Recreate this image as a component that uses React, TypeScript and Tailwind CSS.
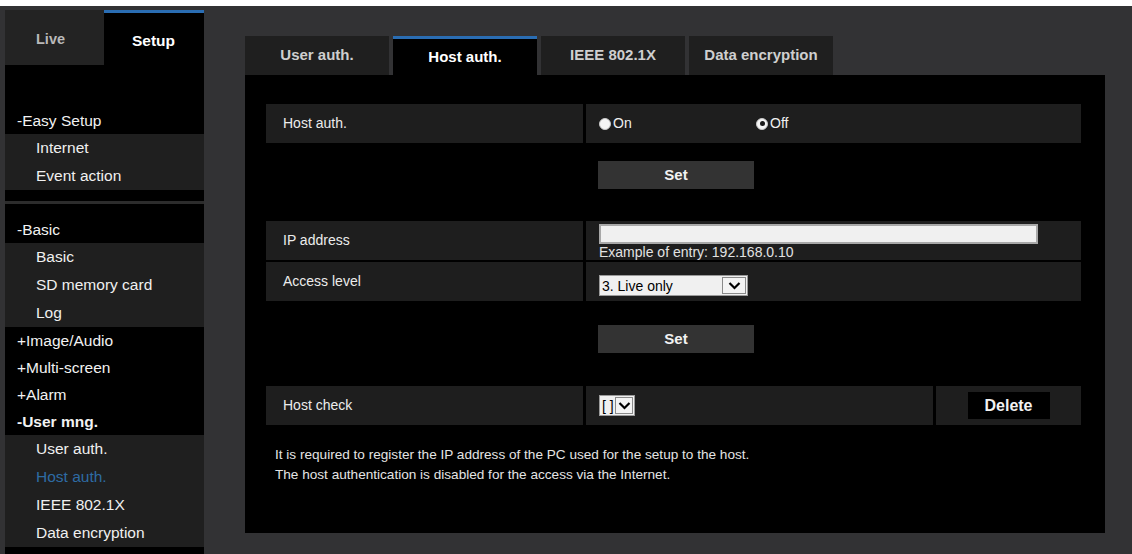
const font = "font-['Liberation_Sans',Arial,Helvetica,sans-serif]";

type NavItem = { label: string; active?: boolean };

function NavHead({ label, bold }: { label: string; bold?: boolean }) {
  return (
    <div className={`h-[27px] flex items-center pl-[12px] text-[15.5px] text-[#f2f2f2] ${bold ? "font-bold" : ""}`}>
      {label}
    </div>
  );
}

function NavGroup({ items }: { items: NavItem[] }) {
  return (
    <div className="bg-[#1f1f1f]">
      {items.map((item) => (
        <div
          key={item.label}
          className={`h-[28px] flex items-center pl-[31px] text-[15.5px] ${item.active ? "text-[#2e6ba3]" : "text-[#f0f0f0]"}`}
        >
          {item.label}
        </div>
      ))}
    </div>
  );
}

function Sidebar() {
  return (
    <div className="ml-[5px] mt-[4px] w-[199px] bg-black flex flex-col">
      <div className="flex h-[55px]">
        <div className="w-[99px] bg-[#232323] flex items-center pl-[31px] pt-[5px] text-[14.5px] font-bold text-[#b9b9b9]">
          Live
        </div>
        <div className="w-[100px] bg-black border-t-[3px] border-[#2a6db3] flex items-center pl-[28px] pt-[3px] text-[15.5px] font-bold text-white">
          Setup
        </div>
      </div>

      <div className="h-[42px]" />
      <NavHead label="-Easy Setup" />
      <NavGroup items={[{ label: "Internet" }, { label: "Event action" }]} />
      <div className="h-[11px]" />
      <div className="h-[3px] bg-[#2c2c2c]" />
      <div className="h-[12px]" />
      <NavHead label="-Basic" />
      <NavGroup items={[{ label: "Basic" }, { label: "SD memory card" }, { label: "Log" }]} />
      <NavHead label="+Image/Audio" />
      <NavHead label="+Multi-screen" />
      <NavHead label="+Alarm" />
      <NavHead label="-User mng." bold />
      <NavGroup
        items={[
          { label: "User auth." },
          { label: "Host auth.", active: true },
          { label: "IEEE 802.1X" },
          { label: "Data encryption" },
        ]}
      />
      <div className="flex-1" />
    </div>
  );
}

function Label({ text }: { text: string }) {
  return <div className="w-[317px] bg-[#1e1e1e] flex items-center pl-[17px] text-[14px] text-[#ececec]">{text}</div>;
}

function SetButton() {
  return (
    <div className="ml-[332px] w-[156px] h-[28px] bg-[#333333] flex items-center justify-center text-[15px] font-bold text-[#f2f2f2]">
      Set
    </div>
  );
}

function Chevron() {
  return (
    <svg width="13" height="9" viewBox="0 0 13 9" className="block">
      <polyline points="1.5,2 6.5,7 11.5,2" fill="none" stroke="#000" strokeWidth="2.2" />
    </svg>
  );
}

function SelectBox({ value, width, arrow }: { value: string; width: number; arrow: number }) {
  return (
    <div className="flex h-[21px] bg-[#f0f0f0] border border-[#9a9a9a] items-stretch" style={{ width }}>
      <div className="flex-1 flex items-center pl-[2px] text-[14px] text-black leading-none overflow-hidden whitespace-nowrap">
        {value}
      </div>
      <div
        className="my-[1px] mr-[1px] border border-[#8a8a8a] bg-[#f4f4f4] flex items-center justify-center"
        style={{ width: arrow }}
      >
        <Chevron />
      </div>
    </div>
  );
}

function Radio({ checked, label }: { checked: boolean; label: string }) {
  return (
    <div className="flex items-center gap-[2px] text-[14px] text-[#f0f0f0]">
      <div className="w-[12px] h-[12px] rounded-full bg-[#f5f5f5] border border-[#c8c8c8] flex items-center justify-center">
        {!checked && <div className="w-[5px] h-[5px] rounded-full bg-[#1a1a1a]" />}
      </div>
      <span>{label}</span>
    </div>
  );
}

function Tab({ label, active }: { label: string; active?: boolean }) {
  return (
    <div
      className={`w-[144px] h-[39px] flex items-center justify-center text-[15px] font-bold ${
        active ? "bg-black text-white border-t-[3px] border-[#2a6db3]" : "bg-[#1f1f1f] text-[#cfcfcf] pb-[1px]"
      }`}
    >
      {label}
    </div>
  );
}

export default function App() {
  return (
    <div className={`w-[1132px] h-[554px] flex flex-col bg-white overflow-hidden ${font}`}>
      <div className="h-[6px] bg-white" />
      <div className="flex-1 flex bg-[#323234]">
        <Sidebar />

        <div className="ml-[41px] pt-[30px] w-[860px] flex flex-col">
          <div className="flex gap-[4px]">
            <Tab label="User auth." />
            <Tab label="Host auth." active />
            <Tab label="IEEE 802.1X" />
            <Tab label="Data encryption" />
          </div>

          <div className="h-[458px] bg-black pt-[29px] pl-[21px] pr-[24px] flex flex-col">
            <div className="flex h-[39px] gap-[3px]">
              <Label text="Host auth." />
              <div className="flex-1 bg-[#1e1e1e] flex items-center pl-[13px]">
                <div className="w-[157px]">
                  <Radio checked label="On" />
                </div>
                <Radio checked={false} label="Off" />
              </div>
            </div>

            <div className="mt-[18px]">
              <SetButton />
            </div>

            <div className="mt-[32px] flex h-[39px] gap-[3px]">
              <Label text="IP address" />
              <div className="flex-1 bg-[#1e1e1e] pl-[13px] pt-[3px] flex flex-col">
                <div className="w-[439px] h-[21px] bg-[#f0f0f0] border-2 border-[#a8a8a8]" />
                <div className="mt-[1px] text-[14px] leading-[15px] text-[#e2e2e2]">Example of entry: 192.168.0.10</div>
              </div>
            </div>

            <div className="mt-[2px] flex h-[39px] gap-[3px]">
              <Label text="Access level" />
              <div className="flex-1 bg-[#1e1e1e] flex items-center pl-[13px]">
                <div className="mt-[8px]">
                  <SelectBox value="3. Live only" width={149} arrow={24} />
                </div>
              </div>
            </div>

            <div className="mt-[24px]">
              <SetButton />
            </div>

            <div className="mt-[33px] flex h-[39px] gap-[3px]">
              <Label text="Host check" />
              <div className="w-[347px] bg-[#1e1e1e] flex items-center pl-[13px]">
                <SelectBox value="[ ]" width={36} arrow={18} />
              </div>
              <div className="flex-1 bg-[#1e1e1e] flex items-center justify-center">
                <div className="w-[82px] h-[27px] bg-black flex items-center justify-center text-[16px] font-bold text-[#f2f2f2]">
                  Delete
                </div>
              </div>
            </div>

            <div className="mt-[20px] pl-[9px] text-[13.6px] leading-[20px] text-[#e4e4e4]">
              <div>It is required to register the IP address of the PC used for the setup to the host.</div>
              <div>The host authentication is disabled for the access via the Internet.</div>
            </div>
          </div>
        </div>
      </div>
    </div>
  );
}
